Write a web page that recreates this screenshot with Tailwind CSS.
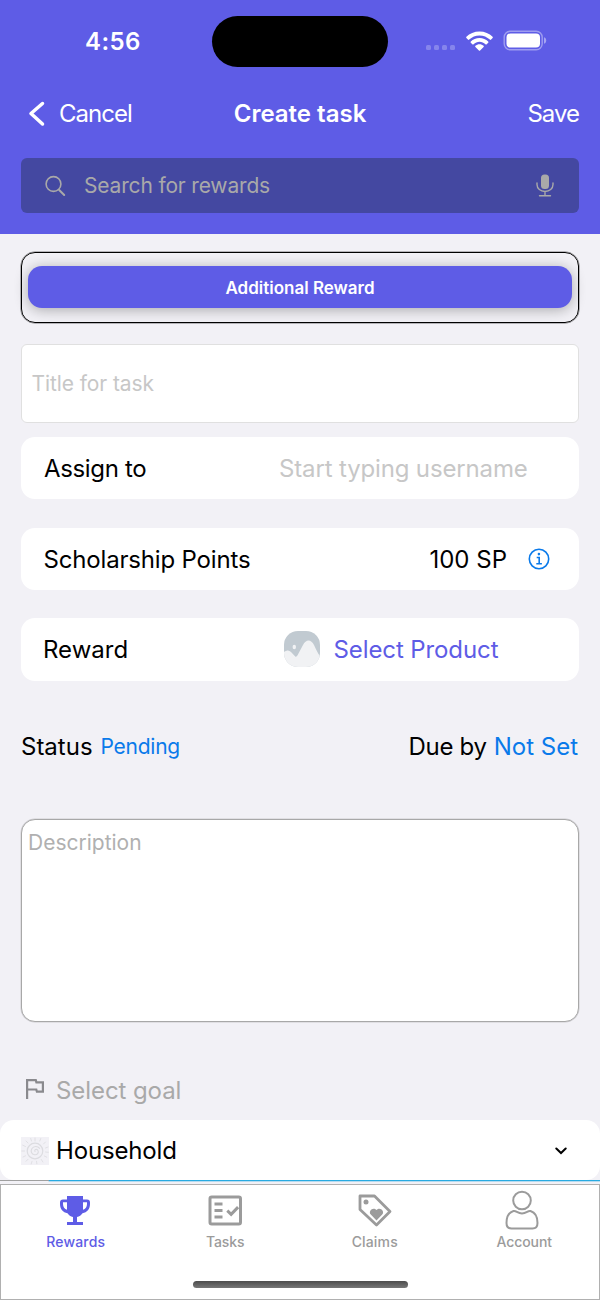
<!DOCTYPE html>
<html lang="en">
  <head>
    <meta charset="UTF-8" />
    <meta name="viewport" content="width=device-width, initial-scale=1.0" />
    <title>Create task</title>
    <script src="https://cdn.jsdelivr.net/npm/@tailwindcss/browser@4"></script>
  </head>
  <body class="bg-[#f2f1f6] font-['Inter','Liberation_Sans',sans-serif] text-black">
    <div class="flex h-[1300px] w-[600px] flex-col overflow-hidden">
      <!-- Header -->
      <header class="h-[234px] shrink-0 bg-[#5e5ce6] text-white">
        <!-- Status bar -->
        <div class="flex h-[83px] items-center">
          <div class="w-[212px] pl-[85px] text-2xl font-semibold tracking-[0.4px]">4:56</div>
          <div class="h-[51px] w-[176px] rounded-full bg-black"></div>
          <div class="flex items-center pl-[38px]">
            <div class="mt-[12px] flex gap-[3px]">
              <span class="size-[5px] rounded-[1.5px] bg-white/25"></span>
              <span class="size-[5px] rounded-[1.5px] bg-white/25"></span>
              <span class="size-[5px] rounded-[1.5px] bg-white/25"></span>
              <span class="size-[5px] rounded-[1.5px] bg-white/25"></span>
            </div>
            <svg class="mb-[2px] ml-[11px] h-5 w-[27px]" viewBox="0 0 27 20" fill="white">
              <path d="M13.500.5c5.200 0 9.900 2 13.100 5.300.4.400.4.900 0 1.300l-1.500 1.500c-.4.400-.9.400-1.300 0C21.100 5.900 17.500 4.400 13.500 4.400S5.900 5.900 3.200 8.600c-.4.400-.9.400-1.300 0L.4 7.100c-.4-.4-.4-.9 0-1.300C3.600 2.500 8.300.5 13.500.5z" />
              <path d="M13.500 6.900c3.400 0 6.500 1.300 8.700 3.500.4.400.4.900 0 1.300l-1.500 1.500c-.4.400-.9.400-1.300 0-1.600-1.500-3.600-2.400-5.900-2.400s-4.300.9-5.900 2.400c-.4.400-.9.400-1.300 0l-1.500-1.500c-.4-.4-.4-.9 0-1.300 2.200-2.200 5.300-3.500 8.700-3.500z" />
              <path d="M13.500 13.300c1.600 0 3 .6 4.100 1.500.4.400.4.800 0 1.200l-3.500 3.400c-.4.400-.8.400-1.200 0L9.400 16c-.4-.4-.4-.8 0-1.200 1.100-.9 2.500-1.500 4.100-1.500z" />
            </svg>
            <svg class="mb-[2px] ml-[10px] h-[21px] w-[44px]" viewBox="0 0 44 21">
              <rect x="1.200" y="1.200" width="38" height="18.600" rx="6" fill="none" stroke="white" stroke-opacity=".4" stroke-width="1.400" />
              <rect x="3.500" y="3.500" width="33.500" height="14" rx="4" fill="white" />
              <path d="M41 7.300c1.600.6 2.200 1.800 2.200 3.200s-.6 2.600-2.200 3.200z" fill="white" fill-opacity=".45" />
            </svg>
          </div>
        </div>
        <!-- Navigation bar -->
        <div class="grid h-[62px] grid-cols-3 items-center px-[21px] text-2xl">
          <div class="flex items-center">
            <svg class="ml-[7px] h-[26px] w-[17px]" viewBox="0 0 17 26" fill="none" stroke="white" stroke-width="3.500" stroke-linecap="round" stroke-linejoin="round">
              <path d="M14.500 2.500 3 12.500l11.500 10.500" />
            </svg>
            <span class="ml-[14px] tracking-[-1px]">Cancel</span>
          </div>
          <h1 class="text-center font-semibold">Create task</h1>
          <span class="text-right tracking-[-1px]">Save</span>
        </div>
        <!-- Search -->
        <div class="mx-[21px] mt-[13px] flex h-[55px] items-center rounded-md bg-[#4448a1] text-[#a9a9a9]">
          <svg class="ml-[24px] size-[22px]" viewBox="0 0 22 22" fill="none" stroke="currentColor" stroke-width="1.600" stroke-linecap="round">
            <circle cx="8.500" cy="9" r="7.400" />
            <path d="m14.200 15 5 5" stroke-width="2" />
          </svg>
          <span class="mt-px ml-[17px] text-[21px] tracking-[-0.17px]">Search for rewards</span>
          <svg class="mr-[25px] ml-auto h-[23px] w-[18px]" viewBox="0 0 18 23" fill="none" stroke="currentColor" stroke-width="1.400" stroke-linecap="round">
            <rect x="5" y=".5" width="8" height="14.500" rx="3.500" fill="currentColor" stroke="none" />
            <path d="M1 9v1.500c0 4.200 3.500 7 8 7s8-2.800 8-7V9M9 17.500v4M3.500 21.700h11" />
          </svg>
        </div>
      </header>

      <main class="flex flex-col px-[21px] pt-[18px] text-2xl">
        <div class="flex h-[71px] items-center rounded-[14px] border border-black px-1.5 pb-px shadow-[0_0_0_0.5px_rgba(0,0,0,0.5)]">
          <button class="h-[42px] w-full rounded-[14px] bg-[#5e5ce6] pt-0.5 text-[17px] font-semibold text-white shadow-[0_2px_14px_rgba(0,0,0,0.3)]">Additional Reward</button>
        </div>

        <div class="mt-[21px] flex h-[79px] items-center rounded-md border border-[#e0e0e0] bg-white pt-px pl-[9.500px] text-[21px] tracking-[-0.09px] text-[#c7c7c7]">Title for task</div>

        <div class="mt-[14px] flex h-[62px] items-center rounded-[14px] bg-white pt-0.5 pl-[23px]">
          <span class="w-[235px] tracking-[-0.35px]">Assign to</span>
          <span class="tracking-[-0.15px] text-[#c7c7c7]">Start typing username</span>
        </div>

        <div class="mt-[29px] flex h-[62px] items-center rounded-[14px] bg-white pr-[29px] pl-[22.500px]">
          <span class="mt-0.5 tracking-[-0.17px]">Scholarship Points</span>
          <span class="mt-0.5 ml-auto">100 SP</span>
          <svg class="ml-[21px] size-[22px] text-[#0a7aea]" viewBox="0 0 22 22" fill="none" stroke="currentColor" stroke-width="1.600">
            <circle cx="11" cy="11" r="9.700" />
            <path d="M8.700 9.500h2.500v6M8.300 15.700h5.600" />
            <circle cx="10.900" cy="6.100" r="1.300" fill="currentColor" stroke="none" />
          </svg>
        </div>

        <div class="mt-[28px] flex h-[63px] items-center rounded-[14px] bg-white pl-[22px]">
          <span class="mt-px w-[241px]">Reward</span>
          <svg class="mb-0.5 size-9" viewBox="0 0 36 36">
            <defs>
              <clipPath id="thumb"><rect width="36" height="36" rx="14" /></clipPath>
            </defs>
            <g clip-path="url(#thumb)">
              <rect width="36" height="36" fill="#c1cad1" />
              <path d="M0 21c3-2 5-2 7 0l4 4.200c.8.900 1.700.6 2.400-.6L19 14c3-6 8-6 11 0 2 4 4 9 6 11v11H0z" fill="#f1f2f4" />
              <ellipse cx="10.300" cy="16" rx="1.700" ry="2.200" fill="#f1f2f4" />
            </g>
          </svg>
          <span class="mt-px ml-[13.500px] tracking-[-0.1px] text-[#5e5ce6]">Select Product</span>
        </div>

        <div class="mt-[49px] flex h-8 items-center pt-px">
          <span>Status</span>
          <span class="ml-[8px] text-[21px] tracking-[-0.25px] text-[#0a7aea]">Pending</span>
          <span class="ml-auto tracking-[-0.3px]">Due by</span>
          <span class="mr-px ml-[7px] text-[#0a7aea]">Not Set</span>
        </div>

        <div class="mt-[57px] h-[203px] rounded-[14px] border border-[#a8a8a8] bg-white px-1.5 pt-[7px] text-[21px] leading-8 text-[#b0b0b0] shadow-[0_0_0_0.5px_rgba(0,0,0,0.15)]">Description</div>

        <div class="mt-[52px] flex h-8 items-center text-[#a9a9a9]">
          <svg class="ml-1 h-[22px] w-[20px]" viewBox="0 0 20 22" fill="none" stroke="#8a8a8e" stroke-width="2.200">
            <path d="M2.100 20V1.100h8.700l.6 2.200h6.500v9.400h-6l-.6-2.200H2.100" />
          </svg>
          <span class="mt-px ml-[11px] tracking-[-0.08px]">Select goal</span>
        </div>
      </main>

      <!-- Goal category -->
      <div class="mt-[14px] flex h-[60px] shrink-0 items-center rounded-[14px] bg-white px-[21px] text-2xl">
        <svg class="mt-px size-7" viewBox="0 0 28 28" fill="none" stroke="#dcdce0" stroke-width=".8" stroke-linecap="round">
          <rect width="28" height="28" fill="#f2f1f6" stroke="none" />
          <circle cx="14" cy="14" r="7.800" stroke-width="1.200" />
          <path d="M14 14.500c-1-1.800 1.500-3 2.800-1.300 1.500 2.200-.4 4.800-3 4.600-3-.2-4.500-3.500-3-6 1.800-2.800 5.800-3 7.800-.4" stroke-width="1.100" />
          <path d="M14 1v3M18.800 4l1-2.500M22.500 7l2-2M24.500 11l2.500-1M24.500 15l2.800.3M23.300 19l2.500 1.200M20.300 22.500l1.600 2.500M15.500 24.300l.4 2.500M11 24.300l-.8 2.700M7 22.300l-2 2M4.500 18.800l-2.500 1.200M3.500 14H.8M4.500 9.500l-2.800-1.300M7 6 5 4M10.500 4l-.8-2.500" />
        </svg>
        <span class="mt-0.5 ml-[7px] tracking-[-0.15px]">Household</span>
        <svg class="mt-px mr-[12px] ml-auto h-2 w-3" viewBox="0 0 12 8" fill="none" stroke="black" stroke-width="2" stroke-linecap="round">
          <path d="m1.300 1.500 4.700 4.500 4.700-4.500" />
        </svg>
      </div>
      <div class="flex h-[4px] shrink-0">
        <div class="h-px w-[49px] bg-[#a0a0a0]"></div>
        <div class="h-px flex-1 bg-[#28aae1] shadow-[0_0.5px_0_0.5px_rgba(40,170,225,0.3)]"></div>
      </div>

      <!-- Tab bar -->
      <nav class="flex flex-1 flex-col border border-[#b0b0b0] bg-white text-sm font-medium text-[#9b9b9b]">
        <div class="grid grid-cols-4 pt-[5px]">
          <div class="flex flex-col items-center text-[#5e5ce6]">
            <svg class="mr-0.5 h-[42px] w-[42px]" viewBox="0 0 42 42" fill="currentColor">
              <path d="M13 6h16v3.500h4c2 0 3 1 3 3V14c0 5-3 8.500-7.500 9.300-1.200 2-3.200 3.300-5.500 3.800v5h6V35H13v-2.900h6v-5c-2.300-.5-4.300-1.800-5.500-3.800C9 22.500 6 19 6 14v-1.500c0-2 1-3 3-3h4zm0 6.300H9V14c0 2.800 1.500 5 4 5.800zm16 0v7.500c2.500-.8 4-3 4-5.800v-1.700z" />
            </svg>
            <span class="tracking-[0.2px]">Rewards</span>
          </div>
          <div class="flex flex-col items-center">
            <svg class="h-[42px] w-[42px]" viewBox="0 0 42 42" fill="none" stroke="currentColor" stroke-width="3">
              <rect x="6" y="7" width="30.500" height="27" rx="1.800" />
              <path d="M10.500 14h8M10.500 20.500h8M10.500 27h8" />
              <path d="m23.300 20.700 3.800 3.600 7-7.200" />
            </svg>
            <span class="tracking-[-0.1px]">Tasks</span>
          </div>
          <div class="flex flex-col items-center">
            <svg class="h-[42px] w-[42px]" viewBox="0 0 42 42" fill="none" stroke="currentColor" stroke-width="2.800" stroke-linejoin="round">
              <path d="M6 6h14.500L36 21.500 22.500 35 6 19.500z" />
              <circle cx="12" cy="12" r="2.500" fill="currentColor" stroke="none" />
              <path d="M22.500 30.500 16.800 24.500c-3-3.300 2.200-8.300 5.700-4.500 3.500-3.800 8.700 1.200 5.700 4.500z" fill="currentColor" stroke="none" />
            </svg>
            <span class="tracking-[0.15px]">Claims</span>
          </div>
          <div class="flex flex-col items-center">
            <svg class="ml-0.5 h-[42px] w-[42px]" viewBox="0 0 42 42" fill="none" stroke="currentColor" stroke-width="2">
              <circle cx="18" cy="10.500" r="8.800" />
              <path d="M9.500 21c2.500-.8 4 2.400 8.500 2.400s6-3.200 8.500-2.400c5 1.500 7 6 7 12 0 4-1.500 5.500-5 5.500h-21c-3.500 0-5-1.500-5-5.500 0-6 2-10.500 7-12z" />
            </svg>
            <span class="tracking-[-0.1px]">Account</span>
          </div>
        </div>
        <div class="mx-auto mt-auto mb-[11px] h-[7px] w-[215px] rounded-full bg-linear-to-b from-[#4d4d4d] to-[#777777]"></div>
      </nav>
    </div>
  </body>
</html>
